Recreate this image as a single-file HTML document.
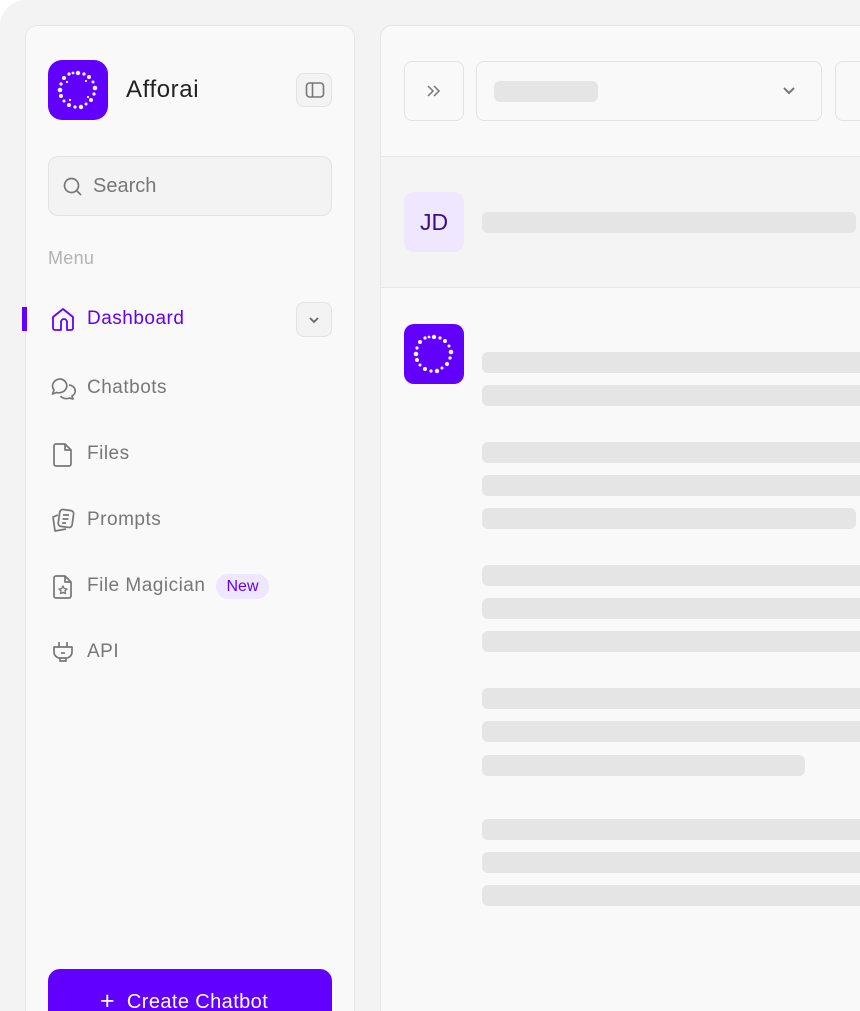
<!DOCTYPE html>
<html><head><meta charset="utf-8"><style>
*{box-sizing:border-box;margin:0;padding:0}
html,body{width:860px;height:1011px;overflow:hidden}
body{background:#fff;font-family:"Liberation Sans",sans-serif}
.wrap{position:relative;width:860px;height:1011px;overflow:hidden}
.frame{position:absolute;left:0;top:0;width:900px;height:1100px;background:#f3f3f3;border-radius:26px 0 0 0}
.side{position:absolute;left:25px;top:25px;width:330px;height:1020px;background:#f9f9f9;border:1px solid #e6e6e6;border-radius:12px}
.main{position:absolute;left:380px;top:25px;width:520px;height:1020px;background:#f9f9f9;border:1px solid #e6e6e6;border-radius:12px 0 0 0;overflow:hidden}
.logo{position:absolute;width:60px;height:60px;background:#6100ff;border-radius:14px}
.abs{position:absolute}
.btn{position:absolute;border:1px solid #e3e3e3;border-radius:8px;background:#f3f3f3}
.nav{position:absolute;left:87px;font-size:19px;letter-spacing:0.5px;color:#777;}
.ic{position:absolute;left:50px;width:26px;height:26px}
.bar{position:absolute;left:101px;height:21px;background:#e5e5e5;border-radius:6px;width:420px}
</style></head><body><div class="wrap">
<div class="frame"></div>
<div class="side"></div>
<div class="logo" style="left:48px;top:60px">
<svg width="60" height="60" viewBox="0 0 60 60" fill="#fff">
<circle cx="30" cy="13" r="2.2"/><circle cx="36" cy="14" r="1.6"/><circle cx="41" cy="17" r="2"/><circle cx="45" cy="22" r="1.5"/><circle cx="47" cy="28" r="2.3"/><circle cx="46" cy="34" r="1.6"/><circle cx="43" cy="40" r="2"/><circle cx="38" cy="44" r="1.5"/><circle cx="33" cy="47" r="2.2"/><circle cx="27" cy="47" r="1.6"/><circle cx="21" cy="45" r="2"/><circle cx="16" cy="41" r="1.5"/><circle cx="13" cy="36" r="2"/><circle cx="12" cy="30" r="2.3"/><circle cx="13" cy="24" r="1.6"/><circle cx="16" cy="18" r="2"/><circle cx="21" cy="14" r="1.6"/><circle cx="25" cy="13" r="1.4"/><circle cx="19" cy="22" r="1.1"/><circle cx="40" cy="37" r="1.1"/><circle cx="22" cy="40" r="1.1"/><circle cx="38" cy="21" r="1.1"/>
</svg></div>
<div class="abs" style="left:126px;top:76px;font-size:24px;letter-spacing:0.6px;color:#222">Afforai</div>
<div class="btn" style="left:296px;top:73px;width:36px;height:34px"><svg class="abs" style="left:8px;top:7px" width="20" height="18" viewBox="0 0 20 18" fill="none" stroke="#777" stroke-width="1.6"><rect x="1.5" y="2" width="17" height="14" rx="3"/><line x1="7.5" y1="2" x2="7.5" y2="16"/></svg></div>
<div class="btn" style="left:48px;top:156px;width:284px;height:60px;border-radius:10px"><svg class="abs" style="left:13px;top:19px" width="22" height="22" viewBox="0 0 22 22" fill="none" stroke="#777" stroke-width="1.7"><circle cx="9.5" cy="9.5" r="7"/><line x1="14.5" y1="14.5" x2="19" y2="19"/></svg><div class="abs" style="left:44px;top:18px;font-size:20px;color:#777">Search</div></div>
<div class="abs" style="left:48px;top:248px;font-size:18px;letter-spacing:0.3px;color:#b3b3b3">Menu</div>
<div class="abs" style="left:22px;top:307px;width:5px;height:24px;background:#6100ff"></div>
<svg class="ic" style="top:306px" viewBox="0 0 26 26" fill="none" stroke="#6100ff" stroke-width="1.8" stroke-linejoin="round"><path d="M3 11 L13 3 L23 11 V22 a2 2 0 0 1-2 2 H17 V16 a3 3 0 0 0-6 0 V24 H5 a2 2 0 0 1-2-2Z"/></svg>
<div class="nav" style="top:308px;color:#6100ff">Dashboard</div>
<div class="btn" style="left:296px;top:302px;width:36px;height:35px"><svg class="abs" style="left:11px;top:11px" width="12" height="12" viewBox="0 0 12 12" fill="none" stroke="#666" stroke-width="1.8"><path d="M2 4l4 4 4-4"/></svg></div>
<svg class="ic" style="top:376px" viewBox="0 0 26 26" fill="none" stroke="#777" stroke-width="1.7" stroke-linejoin="round"><path d="M11 3a8 7 0 0 0-7 11l-1.5 4 4-1.5A8 7 0 1 0 11 3Z"/><path d="M19 9a7 6 0 0 1 3 11l1 3-3.5-1a7 6 0 0 1-9-2"/></svg>
<div class="nav" style="top:377px">Chatbots</div>
<svg class="ic" style="top:442px" viewBox="0 0 26 26" fill="none" stroke="#777" stroke-width="1.7" stroke-linejoin="round"><path d="M6 2h9l6 6v14a2 2 0 0 1-2 2H6a2 2 0 0 1-2-2V4a2 2 0 0 1 2-2Z"/><path d="M15 2v6h6"/></svg>
<div class="nav" style="top:443px">Files</div>
<svg class="ic" style="top:508px" viewBox="0 0 26 26" fill="none" stroke="#777" stroke-width="1.7" stroke-linejoin="round"><rect x="9" y="2" width="14" height="17" rx="3" transform="rotate(8 16 10)"/><path d="M8 7 3 9 5 23l11-2"/><path d="M13 7h6M12.5 11h6M12 15h4"/></svg>
<div class="nav" style="top:509px">Prompts</div>
<svg class="ic" style="top:574px" viewBox="0 0 26 26" fill="none" stroke="#777" stroke-width="1.7" stroke-linejoin="round"><path d="M6 2h9l6 6v14a2 2 0 0 1-2 2H6a2 2 0 0 1-2-2V4a2 2 0 0 1 2-2Z"/><path d="M15 2v6h6"/><path d="M13 12l1.3 2.6 2.7.4-2 1.9.5 2.7-2.5-1.3-2.5 1.3.5-2.7-2-1.9 2.7-.4Z" stroke-width="1.3"/></svg>
<div class="nav" style="top:575px">File Magician</div>
<div class="abs" style="left:216px;top:574px;width:53px;height:25px;border-radius:12px;background:#efe7ff;color:#6100ff;font-size:16px;text-align:center;line-height:25px">New</div>
<svg class="ic" style="top:640px" viewBox="0 0 26 26" fill="none" stroke="#777" stroke-width="1.7" stroke-linejoin="round"><path d="M9 2v5M17 2v5"/><path d="M4 7h18v5a6 6 0 0 1-6 6h-6a6 6 0 0 1-6-6Z"/><path d="M10 18v3h6v-3"/><path d="M11 13h4"/></svg>
<div class="nav" style="top:641px">API</div>
<div class="abs" style="left:48px;top:969px;width:284px;height:60px;background:#6100ff;border-radius:12px"><div class="abs" style="left:52px;top:17px;color:#fff;font-size:20px;letter-spacing:0.4px;white-space:nowrap"><span style="font-size:25px;font-weight:300;position:relative;top:1px">+</span>&nbsp; Create Chatbot</div></div>

<div class="main">
 <div class="abs" style="left:0;top:130px;width:520px;height:132px;background:#f4f4f4;border-top:1px solid #e6e6e6;border-bottom:1px solid #e6e6e6"></div>
 <div class="abs" style="left:23px;top:35px;width:60px;height:60px;border:1px solid #e3e3e3;border-radius:8px;background:#f9f9f9"><svg class="abs" style="left:20px;top:22px" width="18" height="14" viewBox="0 0 18 14" fill="none" stroke="#777" stroke-width="1.5"><path d="M3 2l5 5-5 5M9 2l5 5-5 5"/></svg></div>
 <div class="abs" style="left:95px;top:35px;width:346px;height:60px;border:1px solid #e3e3e3;border-radius:8px;background:#f9f9f9"><div class="abs" style="left:17px;top:19px;width:104px;height:21px;background:#e5e5e5;border-radius:6px"></div><svg class="abs" style="left:305px;top:23px" width="14" height="12" viewBox="0 0 14 12" fill="none" stroke="#777" stroke-width="2"><path d="M2 3l5 5 5-5"/></svg></div>
 <div class="abs" style="left:454px;top:35px;width:80px;height:60px;border:1px solid #e3e3e3;border-radius:8px;background:#f9f9f9"></div>
 <div class="abs" style="left:23px;top:166px;width:60px;height:60px;border-radius:10px;background:#efe7ff;color:#3a0d8a;font-size:23px;text-align:center;line-height:60px">JD</div>
 <div class="bar" style="top:186px;width:374px"></div>
 <div class="logo" style="left:23px;top:298px;border-radius:10px"><svg width="60" height="60" viewBox="0 0 60 60" fill="#fff"><circle cx="30" cy="13" r="2.2"/><circle cx="36" cy="14" r="1.6"/><circle cx="41" cy="17" r="2"/><circle cx="45" cy="22" r="1.5"/><circle cx="47" cy="28" r="2.3"/><circle cx="46" cy="34" r="1.6"/><circle cx="43" cy="40" r="2"/><circle cx="38" cy="44" r="1.5"/><circle cx="33" cy="47" r="2.2"/><circle cx="27" cy="47" r="1.6"/><circle cx="21" cy="45" r="2"/><circle cx="16" cy="41" r="1.5"/><circle cx="13" cy="36" r="2"/><circle cx="12" cy="30" r="2.3"/><circle cx="13" cy="24" r="1.6"/><circle cx="16" cy="18" r="2"/><circle cx="21" cy="14" r="1.6"/><circle cx="25" cy="13" r="1.4"/></svg></div>
 <div class="bar" style="top:326px"></div>
 <div class="bar" style="top:359px"></div>
 <div class="bar" style="top:416px"></div>
 <div class="bar" style="top:449px"></div>
 <div class="bar" style="top:482px;width:374px"></div>
 <div class="bar" style="top:539px"></div>
 <div class="bar" style="top:572px"></div>
 <div class="bar" style="top:605px"></div>
 <div class="bar" style="top:662px"></div>
 <div class="bar" style="top:695px"></div>
 <div class="bar" style="top:729px;width:323px"></div>
 <div class="bar" style="top:793px"></div>
 <div class="bar" style="top:826px"></div>
 <div class="bar" style="top:859px"></div>
</div>
</div></body></html>
